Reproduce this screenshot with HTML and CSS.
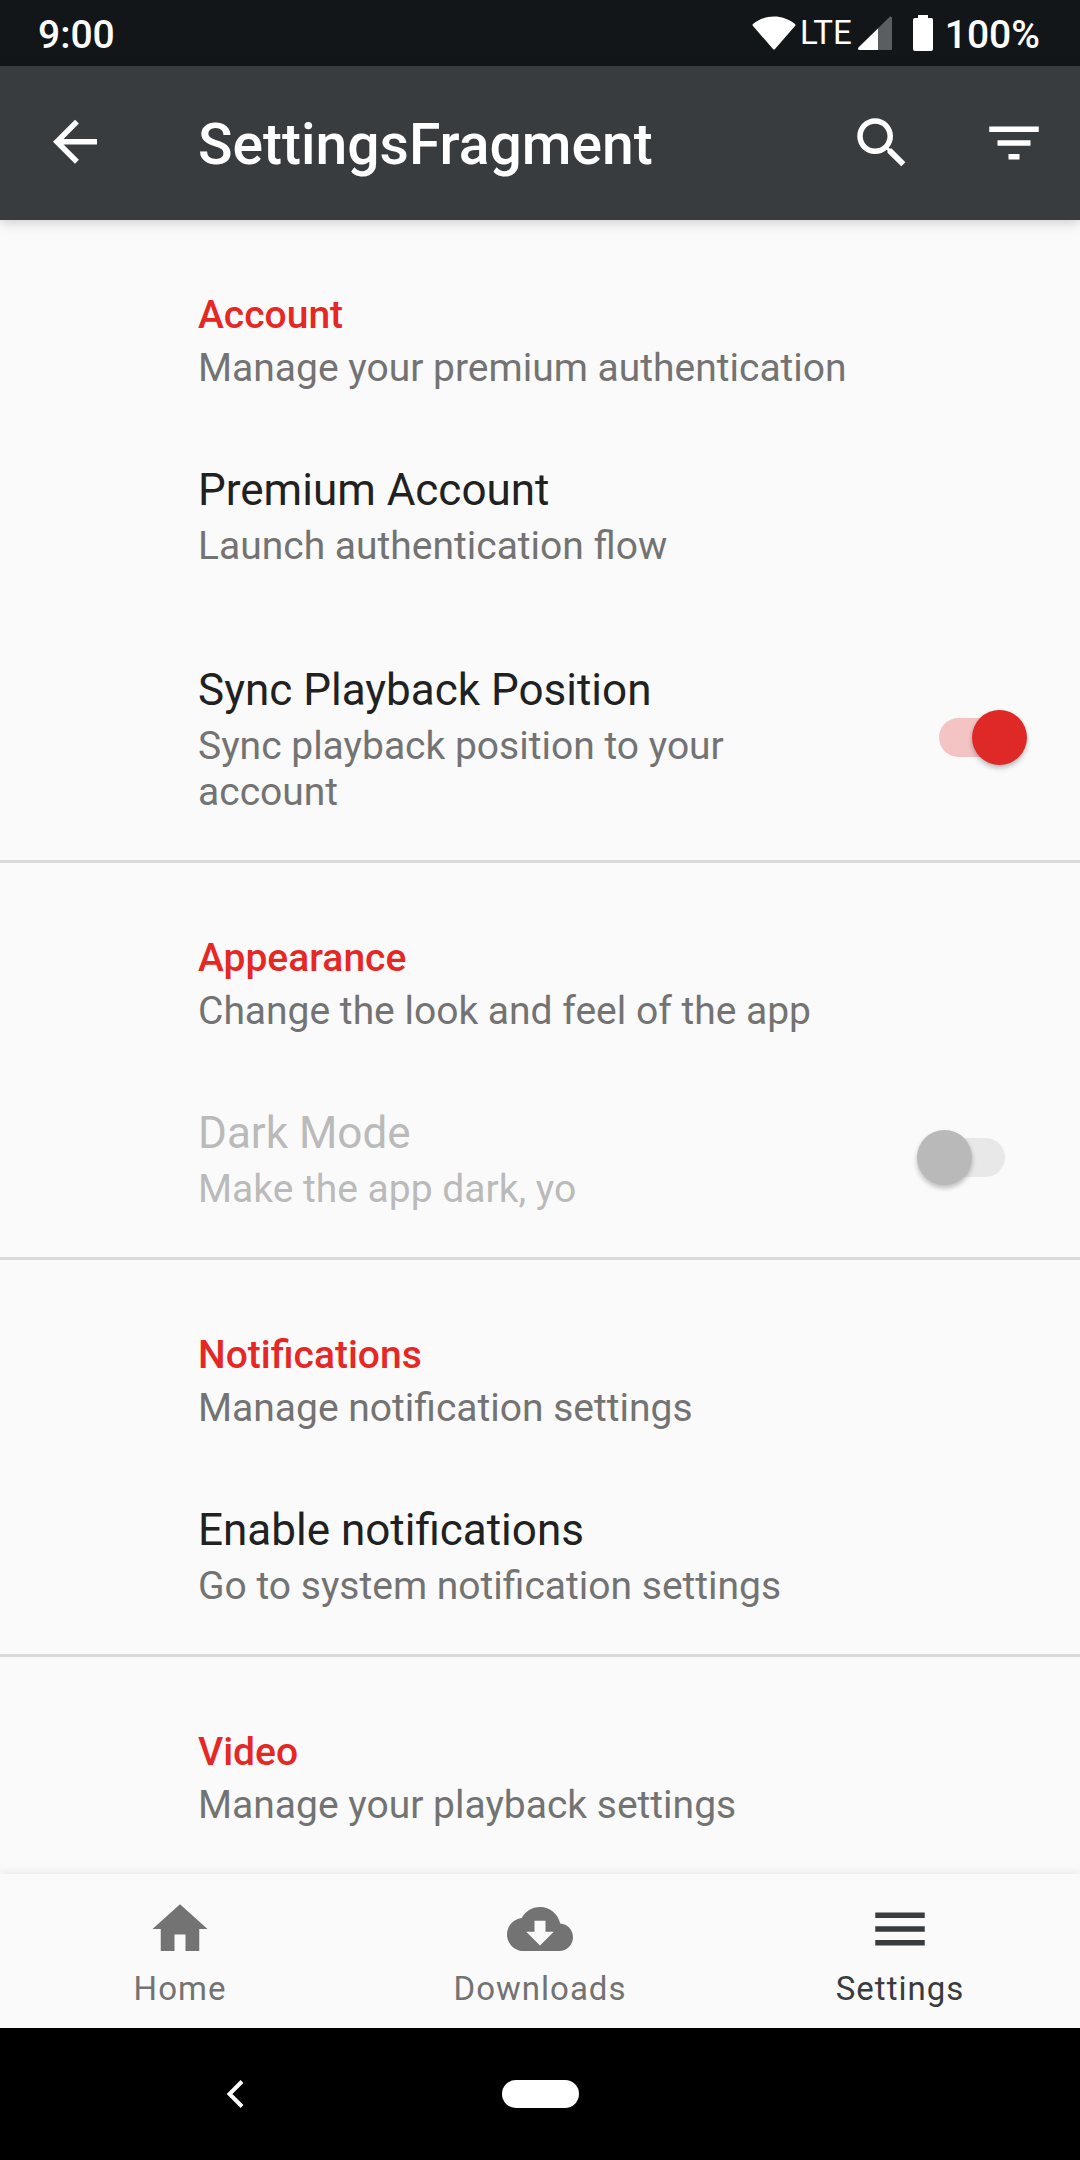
FILE: index.html
```html
<!DOCTYPE html>
<html lang="en">
<head>
<meta charset="utf-8">
<meta name="viewport" content="width=device-width, initial-scale=1">
<title>Settings</title>
<link rel="stylesheet" href="styles.css">
</head>
<body>
<div class="status-bar">
  <span class="status-text">9:00</span>
  <div class="status-icons">
    <svg class="icon-wifi" viewBox="0 0 44 34" aria-hidden="true"><path d="M1 8C13-2 31-2 43 8Q44 9 43 10L23 33Q22 34 21 33L1 10Q0 9 1 8Z" fill="#fff"/></svg>
    <span class="status-network">LTE</span>
    <svg class="icon-signal" viewBox="0 0 34 34" aria-hidden="true"><path d="M1 34Q0 34 0 32L32 0.500Q34 0 34 2V33Q34 34 33 34Z" fill="#5a5e61"/><path d="M1 34Q-1 33 1 31L20 12.500V34Z" fill="#fff"/></svg>
    <svg class="icon-battery" viewBox="0 0 20 36" aria-hidden="true"><path d="M5 0H15V3H18.500Q20 3 20 5V34Q20 36 18 36H2Q0 36 0 34V5Q0 3 2 3H5Z" fill="#fff"/></svg>
    <span class="status-text">100%</span>
  </div>
</div>
<header class="app-bar">
  <button class="icon-button" type="button" aria-label="Back"><svg class="icon" viewBox="0 0 24 24"><path d="M20 10.500H7.830l5.590-5.590L12 3.500l-8 8 8 8 1.410-1.410L7.830 12.500H20v-2z"/></svg></button>
  <h1 class="app-title">SettingsFragment</h1>
  <button class="icon-button" type="button" aria-label="Search"><svg class="icon" viewBox="0 0 24 24"><path d="M15.500 14h-.79l-.28-.27C15.410 12.590 16 11.110 16 9.500 16 5.910 13.090 3 9.500 3S3 5.910 3 9.500 5.910 16 9.500 16c1.610 0 3.090-.59 4.230-1.570l.27.28v.79l5 4.990L20.490 19l-4.990-5zm-6 0C7.010 14 5 11.990 5 9.500S7.010 5 9.500 5 14 7.010 14 9.500 11.990 14 9.500 14z"/></svg></button>
  <button class="icon-button" type="button" aria-label="Filter"><svg class="icon" viewBox="0 0 24 24"><path d="M10 18h4v-2h-4v2zM3 6v2h18V6H3zm3 7h12v-2H6v2z"/></svg></button>
</header>
<main class="settings">
  <section class="group">
    <div class="group-head"><h2 class="group-name">Account</h2><p class="summary">Manage your premium authentication</p></div>
    <div class="item"><div class="item-text"><h3 class="item-title">Premium Account</h3><p class="summary">Launch authentication flow</p></div></div>
    <label class="item"><span class="item-text"><span class="item-title">Sync Playback Position</span><span class="summary">Sync playback position to your account</span></span><input class="switch" type="checkbox" role="switch" checked></label>
  </section>
  <section class="group">
    <div class="group-head"><h2 class="group-name">Appearance</h2><p class="summary">Change the look and feel of the app</p></div>
    <label class="item item-disabled"><span class="item-text"><span class="item-title">Dark Mode</span><span class="summary">Make the app dark, yo</span></span><input class="switch" type="checkbox" role="switch" disabled></label>
  </section>
  <section class="group">
    <div class="group-head"><h2 class="group-name">Notifications</h2><p class="summary">Manage notification settings</p></div>
    <div class="item"><div class="item-text"><h3 class="item-title">Enable notifications</h3><p class="summary">Go to system notification settings</p></div></div>
  </section>
  <section class="group">
    <div class="group-head"><h2 class="group-name">Video</h2><p class="summary">Manage your playback settings</p></div>
  </section>
</main>
<nav class="tabs">
  <a class="tab" href="#home"><svg class="icon" viewBox="0 0 24 24"><path d="M10 20v-6h4v6h5v-8h3L12 3 2 12h3v8z"/></svg><span>Home</span></a>
  <a class="tab" href="#downloads"><svg class="icon" viewBox="0 0 24 24"><path d="M19.350 10.040C18.670 6.590 15.640 4 12 4 9.110 4 6.600 5.640 5.350 8.040 2.340 8.360 0 10.910 0 14c0 3.310 2.690 6 6 6h13c2.760 0 5-2.240 5-5 0-2.640-2.050-4.780-4.650-4.960zM17 13l-5 5-5-5h3V9h4v4h3z"/></svg><span>Downloads</span></a>
  <a class="tab tab-active" href="#settings" aria-current="page"><svg class="icon" viewBox="0 0 24 24"><path d="M3 18h18v-2H3v2zm0-5h18v-2H3v2zm0-7v2h18V6H3z"/></svg><span>Settings</span></a>
</nav>
<div class="system-nav">
  <button class="system-back" type="button" aria-label="System back"><svg class="icon-chevron" viewBox="0 0 18 28"><path d="M16 1.500L3.500 14L16 26.500" fill="none" stroke="#fff" stroke-width="4"/></svg></button>
  <button class="system-home" type="button" aria-label="System home"></button>
</div>
</body>
</html>
```

FILE: styles.css
```css
* { box-sizing: border-box; }

body {
  margin: 0;
  height: 100vh;
  display: flex;
  flex-direction: column;
  background: #fafafa;
  color: #212121;
  font-family: Roboto, "Liberation Sans", sans-serif;
  font-size: 39px;
  line-height: 46px;
}

h1, h2, h3, p { margin: 0; font-weight: 400; }

button { border: 0; padding: 0; background: none; color: inherit; }

.icon { display: block; width: 66px; height: 66px; fill: currentColor; }

/* Status bar */
.status-bar {
  flex: none;
  display: flex;
  justify-content: space-between;
  align-items: center;
  height: 66px;
  padding: 0 40px 0 38px;
  background: #121618;
  color: #fff;
}
.status-text { padding-top: 4px; font-weight: 500; }
.status-icons { display: flex; align-items: center; }
.status-network { margin: 0 6px 0 4px; font-size: 33px; }
.icon-wifi { width: 44px; height: 34px; }
.icon-signal { width: 34px; height: 34px; }
.icon-battery { width: 20px; height: 36px; margin: 0 12px 0 21px; }

/* App bar */
.app-bar {
  flex: none;
  z-index: 1;
  display: flex;
  align-items: center;
  height: 154px;
  padding: 0 0 0 9px;
  background: #383c3f;
  color: #fff;
  box-shadow: 0 2px 12px rgba(0, 0, 0, .2);
}
.icon-button { flex: none; width: 132px; display: flex; justify-content: center; }
.app-title { flex: 1; margin-left: 57px; padding-top: 4px; font-size: 57px; line-height: 64px; font-weight: 500; }

/* Settings list */
.settings { flex: 1; min-height: 0; overflow: hidden; }
.group + .group { border-top: 3px solid #dadada; }
.group-head { padding: 72px 44px 23px 198px; }
.group-name { font-size: 39px; font-weight: 500; color: #e52825; }
.summary { display: block; margin-top: 7px; color: #737373; }
.item { display: flex; align-items: center; gap: 44px; padding: 50px 53px 45px 198px; }
.item-text { flex: 1; }
.item-title { display: block; font-size: 44px; line-height: 52px; }
.item-disabled, .item-disabled .summary { color: #bababa; }

/* Switch */
.switch {
  appearance: none;
  flex: none;
  position: relative;
  display: flex;
  align-items: center;
  width: 110px;
  height: 55px;
  margin: 0 0 5px;
}
.switch::before {
  content: "";
  position: absolute;
  inset: 8px 22px;
  border-radius: 20px;
  background: #e8e8e8;
}
.switch::after {
  content: "";
  position: relative;
  width: 55px;
  height: 55px;
  border-radius: 50%;
  background: #b9b9b9;
  box-shadow: 0 3px 5px rgba(0, 0, 0, .25);
}
.switch:checked { justify-content: flex-end; }
.switch:checked::before { background: #f4c3c4; }
.switch:checked::after { background: #df2926; }

/* Bottom tabs */
.tabs {
  flex: none;
  z-index: 1;
  display: grid;
  grid-template-columns: repeat(3, 1fr);
  height: 154px;
  background: #fafafa;
  box-shadow: 0 0 10px rgba(0, 0, 0, .1);
}
.tab {
  display: flex;
  flex-direction: column;
  align-items: center;
  gap: 7px;
  padding-top: 22px;
  color: #737373;
  font-size: 33px;
  line-height: 40px;
  letter-spacing: 1px;
  text-decoration: none;
}
.tab-active { color: #383c3f; }

/* System navigation */
.system-nav {
  flex: none;
  display: grid;
  grid-template-columns: 1fr 77px 1fr;
  align-items: center;
  height: 132px;
  background: #000;
}
.system-back { justify-self: center; display: flex; margin-right: 32px; }
.icon-chevron { width: 18px; height: 28px; }
.system-home { height: 28px; border-radius: 14px; background: #fff; }
```
